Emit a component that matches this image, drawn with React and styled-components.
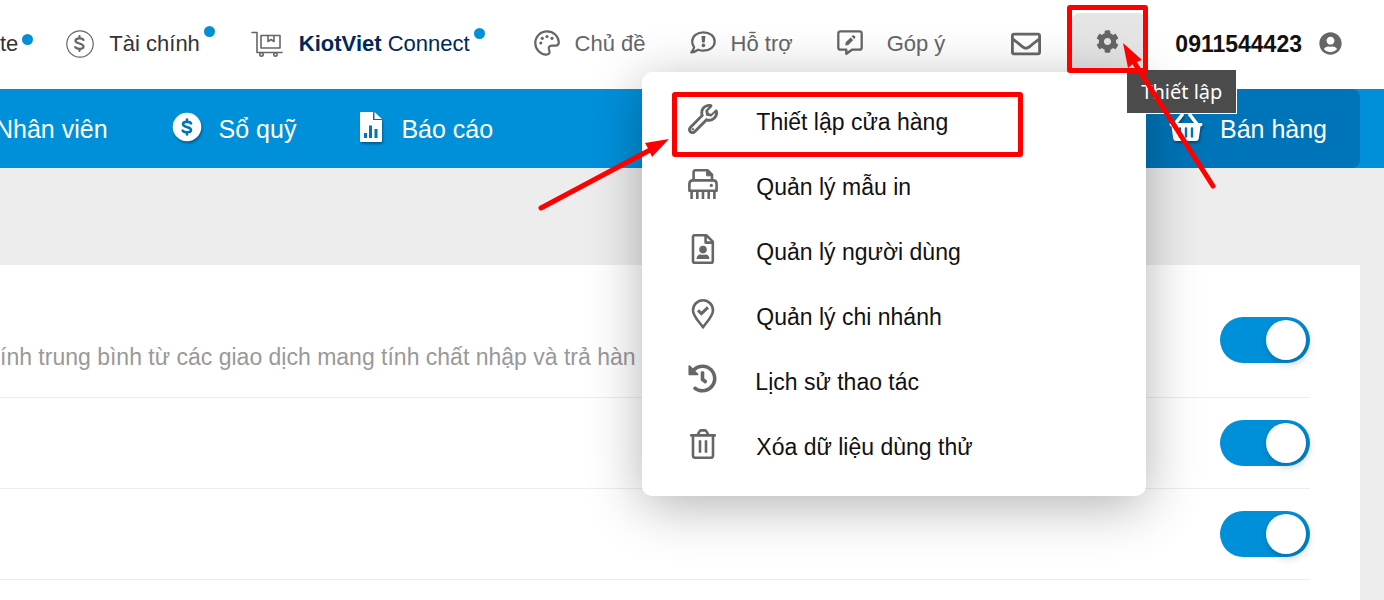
import React from "react";
import styled, { createGlobalStyle } from "styled-components";
import { FaCog, FaHistory, FaRegEnvelope, FaUserCircle } from "react-icons/fa";

const blue = "#0090da";
const red = "#ff0000";
const iconGray = "#666666";

const GlobalStyle = createGlobalStyle`
  * { box-sizing: border-box; }
  body {
    margin: 0;
    background: #ededed;
    font-family: "Liberation Sans", Arial, sans-serif;
    overflow-x: hidden;
  }
  #root { min-height: 100vh; display: flex; flex-direction: column; }
  svg { display: block; flex: none; }
`;

const Header = styled.header`
  position: relative;
  z-index: 2;
  display: flex;
  align-items: center;
  justify-content: space-between;
  height: 89px;
  padding: 0 42px 2px 0;
  background: #fff;
`;

const Group = styled.nav`
  display: flex;
  align-items: center;
`;

const TopLink = styled.a`
  position: relative;
  display: flex;
  align-items: center;
  gap: ${(p) => p.$gap || 15}px;
  margin-right: ${(p) => p.$after || 44}px;
  color: ${(p) => p.$color || iconGray};
  font-size: 22px;
  line-height: 28px;
  white-space: nowrap;
  text-decoration: none;
  svg { color: ${iconGray}; margin-bottom: ${(p) => p.$lift || 0}px; }
`;

const Dot = styled.i`
  position: absolute;
  left: 100%;
  top: ${(p) => p.$top}px;
  width: 11px;
  height: 11px;
  margin-left: 4px;
  border-radius: 50%;
  background: ${blue};
`;

const IconButton = styled.button`
  display: flex;
  align-items: center;
  justify-content: center;
  padding: 0;
  border: 0;
  background: none;
  color: ${iconGray};
`;

const Settings = styled.div`
  position: relative;
  margin: 0 29px 2px 31px;
`;

const GearButton = styled(IconButton)`
  width: 74px;
  height: 59px;
  padding-right: 4px;
  padding-bottom: 3px;
  border-radius: 8px 8px 0 0;
  background: #e5e5e5;
`;

const Account = styled.a`
  display: flex;
  align-items: center;
  gap: 17px;
  color: #111;
  font-size: 23px;
  font-weight: bold;
  line-height: 28px;
  text-decoration: none;
`;

const Menu = styled.ul`
  position: absolute;
  top: 100%;
  right: 0;
  width: 504px;
  margin: 0;
  padding: 17px 0;
  list-style: none;
  background: #fff;
  border-radius: 10px;
  box-shadow: 0 10px 54px rgba(0, 0, 0, 0.3);
`;

const MenuButton = styled.button`
  display: flex;
  align-items: center;
  gap: 38px;
  width: 100%;
  height: 65px;
  padding: 0 46px;
  border: 0;
  background: none;
  color: #111;
  font: 23px/28px "Liberation Sans", Arial, sans-serif;
  text-align: left;
  svg { margin-bottom: 6px; color: ${iconGray}; }
`;

const Tooltip = styled.div`
  position: absolute;
  top: 57px;
  left: 55px;
  padding: 6px 14px;
  border: solid #fff;
  border-width: 0 1px 1px 0;
  background: #4b4b4b;
  color: #fff;
  font: 20px/31px "Noto Sans", sans-serif;
  white-space: nowrap;
`;

const Marker = styled.div`
  position: absolute;
  top: ${(p) => p.$top}px;
  left: ${(p) => p.$left}px;
  width: ${(p) => p.$width}px;
  height: ${(p) => p.$height}px;
  border: 5px solid ${red};
  border-radius: 3px;
  pointer-events: none;
`;

const Arrow = styled.svg`
  position: absolute;
  top: ${(p) => p.$top}px;
  left: ${(p) => p.$left}px;
  pointer-events: none;
`;

const MainBar = styled.div`
  display: flex;
  justify-content: space-between;
  height: 79px;
  padding-right: 24px;
  background: ${blue};
`;

const MainNav = styled(Group)`
  gap: 64px;
  margin-left: -5px;
`;

const MainLink = styled.a`
  display: flex;
  align-items: center;
  gap: 17px;
  color: #fff;
  font-size: 25px;
  line-height: 30px;
  white-space: nowrap;
  text-decoration: none;
  svg { filter: drop-shadow(1px 2px 1px rgba(0, 0, 0, 0.35)); margin-bottom: 4px; }
`;

const SellLink = styled(MainLink)`
  padding: 0 33px 0 32px;
  border-radius: 8px;
  background: #0074b8;
`;

const Panel = styled.main`
  flex: 1;
  margin: 97px 24px 0 0;
  padding-right: 50px;
  background: #fff;
`;

const Setting = styled.div`
  display: flex;
  align-items: ${(p) => (p.$tall ? "flex-start" : "center")};
  justify-content: space-between;
  height: ${(p) => (p.$tall ? 133 : 91)}px;
  padding-top: ${(p) => (p.$tall ? 52 : 0)}px;
  border-bottom: 1px solid #ededed;
`;

const Description = styled.label`
  padding-top: 26px;
  color: #999;
  font-size: 23px;
  line-height: 28px;
  white-space: nowrap;
`;

const Toggle = styled.input`
  appearance: none;
  flex: none;
  width: 90px;
  height: 46px;
  margin: 0 0 0 auto;
  padding: 3px 4px;
  display: flex;
  justify-content: flex-end;
  border-radius: 23px;
  background: ${blue};
  &::before {
    content: "";
    width: 40px;
    height: 40px;
    border-radius: 50%;
    background: #fff;
    box-shadow: 2px 3px 8px rgba(0, 0, 0, 0.25);
  }
  &:not(:checked) { justify-content: flex-start; background: #ccc; }
`;

const Line = ({ w, h, box, sw = 2.5, children }) => (
  <svg width={w} height={h} viewBox={box || `0 0 ${w} ${h}`} fill="none" stroke="currentColor"
    strokeWidth={sw} strokeLinecap="round" strokeLinejoin="round" aria-hidden="true">
    {children}
  </svg>
);

const dollarCurve = "M4 -3.6 C3 -5.6 -4 -6 -4 -2.7 C-4 .5 4 -.5 4 3 C4 6.2 -3.2 5.8 -4.3 3.6 M0 -7.4 V-5.3 M0 5.3 V7.4";

const CoinOutline = () => (
  <Line w={28} h={28} sw={1.2}>
    <circle cx="14" cy="14" r="13.2" />
    <path d={dollarCurve} transform="translate(13.5 13.5)" strokeWidth="2.2" />
  </Line>
);

const CoinSolid = () => (
  <Line w={30} h={30} sw={2.6}>
    <circle cx="15" cy="15" r="14.3" fill="#fff" stroke="none" />
    <path d={dollarCurve} transform="translate(15 15)" stroke="#0074b8" />
  </Line>
);

const Trolley = () => (
  <Line w={32} h={26} sw={1.6}>
    <path d="M1 1.5 H6 V21.5 H31" />
    <path d="M10 4.5 H29 V17 H10 Z" />
    <path d="M17 4.5 V10.5 L20 8.5 L23 10.5 V4.5" />
    <circle cx="10.5" cy="23.4" r="1.7" />
    <circle cx="24.5" cy="23.4" r="1.7" />
  </Line>
);

const Palette = () => (
  <Line w={26} h={26} sw={2.2}>
    <path d="M13 1.3 C6.5 1.3 1.3 6.5 1.3 13 C1.3 19.5 6.5 24.8 12.5 24.6 C15.8 24.4 16 22 15.2 20.3 C13.8 17.5 15.3 15.6 18 15.6 H21.5 C23.6 15.6 24.8 14.4 24.8 12.3 C24.5 6 19.5 1.3 13 1.3 Z" />
    <g fill="currentColor" stroke="none">
      <circle cx="6.8" cy="13" r="1.6" /><circle cx="8.3" cy="8.3" r="1.6" />
      <circle cx="13" cy="6.5" r="1.6" /><circle cx="18" cy="8.3" r="1.6" />
    </g>
  </Line>
);

const Help = () => (
  <Line w={26} h={24} sw={2.2}>
    <path d="M13.5 1.3 C19.8 1.3 24.7 5.3 24.7 10.5 C24.7 15.7 19.8 19.7 13.5 19.7 C11.6 19.7 9.8 19.3 8.2 18.7 C6.3 20.3 4 21.4 1.3 21.5 C2.8 19.8 3.8 18 4.1 16.2 C2.9 14.6 2.2 12.6 2.2 10.5 C2.2 5.3 7.2 1.3 13.5 1.3 Z" />
    <path d="M11.4 5 H15.4 L14.7 11.4 H12.1 Z" fill="currentColor" stroke="none" />
    <circle cx="13.4" cy="14.4" r="1.8" fill="currentColor" stroke="none" />
  </Line>
);

const Feedback = () => (
  <Line w={26} h={26} sw={2.3}>
    <path d="M3.5 1.3 H22.5 C23.8 1.3 24.7 2.2 24.7 3.5 V17.5 C24.7 18.8 23.8 19.7 22.5 19.7 H15 L9.3 23.8 V19.7 H3.5 C2.2 19.7 1.3 18.8 1.3 17.5 V3.5 C1.3 2.2 2.2 1.3 3.5 1.3 Z" />
    <path d="M8.2 15.4 L8.7 12.2 L13.6 7.4 L16.2 10 L11.4 14.9 Z M14.5 6.5 L15.6 5.4 Q16.3 4.8 17 5.5 L18.1 6.6 Q18.8 7.3 18.1 8 L17.1 9.1 Z" fill="currentColor" stroke="none" />
  </Line>
);

const Wrench = () => (
  <svg width="30" height="30" viewBox="0 0 512 512" fill="currentColor" aria-hidden="true">
    <path
      fillRule="evenodd"
      d="M507.4 114.5c-2.3-9.5-9.7-17-19.1-19.6-9.5-2.6-19.6 0-26.6 7l-63.9 63.8-44.2-7.3-7.4-44.3 63.8-63.8c7-7 9.7-17.1 7-26.6-2.6-9.4-10.2-16.8-19.7-19.2C345.6-8.3 292 6.5 254.1 44.3c-37.8 37.9-52.2 92.5-38.6 144.7L22.2 382.3c-29.6 29.6-29.6 77.8 0 107.4C36.5 504.1 55.6 512 75.9 512s39.4-7.9 53.7-22.3l193.2-193.1c52 13.8 106.8-.7 144.9-38.8 37.8-37.8 52.7-91.4 39.7-143.3ZM433.8 223.9c-28.8 28.8-70.2 37.5-108.1 22.8l-14.6-5.7L95.7 455.8c-10.6 10.5-29 10.5-39.6 0-10.9-10.9-10.9-28.7 0-39.6L271.3 201.1l-5.7-14.6c-14.7-37.9-6-79.3 22.8-108 18.2-18.3 42-29 67.3-30.2l-61.5 61.5 13.7 82.7c.6 3.7 2.9 6.1 6.6 6.7l82.7 13.6 66.3-61.5c-1.3 25.1-12 54.4-29.7 72.6Z"
    />
    <circle cx="82" cy="430" r="20" />
  </svg>
);

const Shredder = () => (
  <Line w={30} h={30} sw={2.6}>
    <path d="M5.6 11 V3 C5.6 2 6.3 1.3 7.3 1.3 H19.5 L24 5.6 V11" />
    <path d="M18.6 1.3 V6.8 H24 V5.2 L20 1.3 Z" fill="currentColor" strokeWidth="1" />
    <path d="M1.4 21.8 V15 C1.4 12.7 2.8 11.4 5 11.4 H25 C27.2 11.4 28.6 12.7 28.6 15 V21.8 Z" />
    <path d="M3.6 22 V30 M9.3 22 V30 M15 22 V30 M20.7 22 V30 M26.4 22 V30" strokeLinecap="butt" />
    <circle cx="23.3" cy="16.4" r="1.6" fill="currentColor" stroke="none" />
  </Line>
);

const FileUser = () => (
  <Line w={30} h={30} sw={2.6}>
    <path d="M6.3 1.3 H18.5 L24.8 7.6 V26.9 C24.8 28 24.1 28.7 23.1 28.7 H6.7 C5.7 28.7 5 28 5 26.9 V3 C5 2 5.5 1.3 6.3 1.3 Z" />
    <path d="M17.6 1.8 V8.6 H24.4" />
    <g fill="currentColor" stroke="none">
      <circle cx="15" cy="15.6" r="3.8" />
      <path d="M8.6 25 C8.6 22 10.2 20.4 12.4 20.4 C14.2 21 15.8 21 17.6 20.4 C19.8 20.4 21.4 22 21.4 25 Z" />
    </g>
  </Line>
);

const PinCheck = () => (
  <Line w={30} h={30} sw={2.6}>
    <path d="M15 28.4 C12.7 24.4 5 17.4 5 11.4 C5 5.8 9.4 1.3 15 1.3 C20.6 1.3 25 5.8 25 11.4 C25 17.4 17.3 24.4 15 28.4 Z" />
    <path d="M10 11.4 L13.4 14.6 L20 8.4" strokeLinecap="butt" strokeWidth="3" strokeLinejoin="miter" />
  </Line>
);

const Trash = () => (
  <Line w={30} h={30} sw={2.6}>
    <path d="M3.2 6.4 H26.8 M5 6.4 V26.6 C5 27.9 5.8 28.7 7 28.7 H23 C24.2 28.7 25 27.9 25 26.6 V6.4 M9.6 6 L11.4 2.6 C11.8 1.8 12.3 1.4 13.1 1.4 H16.9 C17.7 1.4 18.2 1.8 18.6 2.6 L20.4 6" />
    <path d="M12 11.2 V23.8 M18 11.2 V23.8" strokeLinecap="butt" />
  </Line>
);

const Report = () => (
  <svg width="24" height="30" viewBox="0 0 24 30" aria-hidden="true">
    <path d="M1 0 H13 V8 H22 V29 Q22 30 21 30 H1 Q0 30 0 29 V1 Q0 0 1 0 Z M14.5 0 L22 7 H14.5 Z" fill="#fff" />
    <path d="M4 21 H7 V26 H4 Z M9 13.5 H12 V26 H9 Z M14.5 17 H17.5 V26 H14.5 Z" fill="#0074b8" />
  </svg>
);

const Basket = () => (
  <svg width="34" height="28" viewBox="0 0 34 28" aria-hidden="true">
    <path d="M6 11 L13 2 M28 11 L21 2" stroke="#fff" strokeWidth="3.6" strokeLinecap="round" />
    <path d="M1.5 10 H32.5 Q33.5 10 33.5 11.5 Q33.5 13.5 31.5 13.5 L29.8 25.5 Q29.4 28 27 28 H7 Q4.6 28 4.2 25.5 L2.5 13.5 Q.5 13.5 .5 11.5 Q.5 10 1.5 10 Z" fill="#fff" />
    <path d="M11 15.5 V23.5 M17 15.5 V23.5 M23 15.5 V23.5" stroke="#0074b8" strokeWidth="2.4" strokeLinecap="round" />
  </svg>
);

const menuItems = [
  ["Thiết lập cửa hàng", <Wrench />],
  ["Quản lý mẫu in", <Shredder />],
  ["Quản lý người dùng", <FileUser />],
  ["Quản lý chi nhánh", <PinCheck />],
  ["Lịch sử thao tác", <FaHistory size={29} />],
  ["Xóa dữ liệu dùng thử", <Trash />],
];

export default function App() {
  return (
    <>
      <GlobalStyle />
      <Header>
        <Group>
          <TopLink href="#" $color="#333" $after={48}>te<Dot $top={4} /></TopLink>
          <TopLink href="#" $color="#333" $after={51}>
            <CoinOutline />Tài chính<Dot $top={-4} />
          </TopLink>
          <TopLink href="#" $color="#00285a" $gap={16}>
            <Trolley /><span><b>KiotViet</b> Connect</span><Dot $top={-2} />
          </TopLink>
        </Group>
        <Group>
          <TopLink href="#" $lift={2}><Palette />Chủ đề</TopLink>
          <TopLink href="#" $lift={2}><Help />Hỗ trợ</TopLink>
          <TopLink href="#" $gap={24} $after={66} $lift={2}><Feedback />Góp ý</TopLink>
          <IconButton aria-label="Hộp thư"><FaRegEnvelope size={30} /></IconButton>
          <Settings>
            <GearButton aria-label="Thiết lập"><FaCog size={23} /></GearButton>
            <Menu>
              {menuItems.map(([label, icon]) => (
                <li key={label}><MenuButton>{icon}{label}</MenuButton></li>
              ))}
              <Marker $top={20} $left={30} $width={351} $height={65} />
              <Arrow $top={60} $left={-110} width="140" height="84" aria-hidden="true">
                <path d="M9 76 L118 18" stroke={red} strokeWidth="5" strokeLinecap="round" />
                <path d="M137 7 L113 11 L117 18 L120 25 Z" fill={red} />
              </Arrow>
            </Menu>
            <Tooltip role="tooltip">Thiết lập</Tooltip>
            <Marker $top={-8} $left={-5} $width={81} $height={68} />
            <Arrow $top={20} $left={41} width="110" height="160" aria-hidden="true">
              <path d="M100 153 L19 26" stroke={red} strokeWidth="5" strokeLinecap="round" />
              <path d="M10 10 L15 35 L21 30 L29 27 Z" fill={red} />
            </Arrow>
          </Settings>
          <Account href="#">0911544423<FaUserCircle size={23} color={iconGray} /></Account>
        </Group>
      </Header>
      <MainBar>
        <MainNav>
          <MainLink href="#">Nhân viên</MainLink>
          <MainLink href="#"><CoinSolid />Sổ quỹ</MainLink>
          <MainLink href="#"><Report />Báo cáo</MainLink>
        </MainNav>
        <SellLink href="#"><Basket />Bán hàng</SellLink>
      </MainBar>
      <Panel>
        <Setting $tall>
          <Description htmlFor="cost">ính trung bình từ các giao dịch mang tính chất nhập và trả hàn</Description>
          <Toggle id="cost" type="checkbox" defaultChecked />
        </Setting>
        <Setting><Toggle type="checkbox" defaultChecked aria-label="Thiết lập 2" /></Setting>
        <Setting><Toggle type="checkbox" defaultChecked aria-label="Thiết lập 3" /></Setting>
      </Panel>
    </>
  );
}
